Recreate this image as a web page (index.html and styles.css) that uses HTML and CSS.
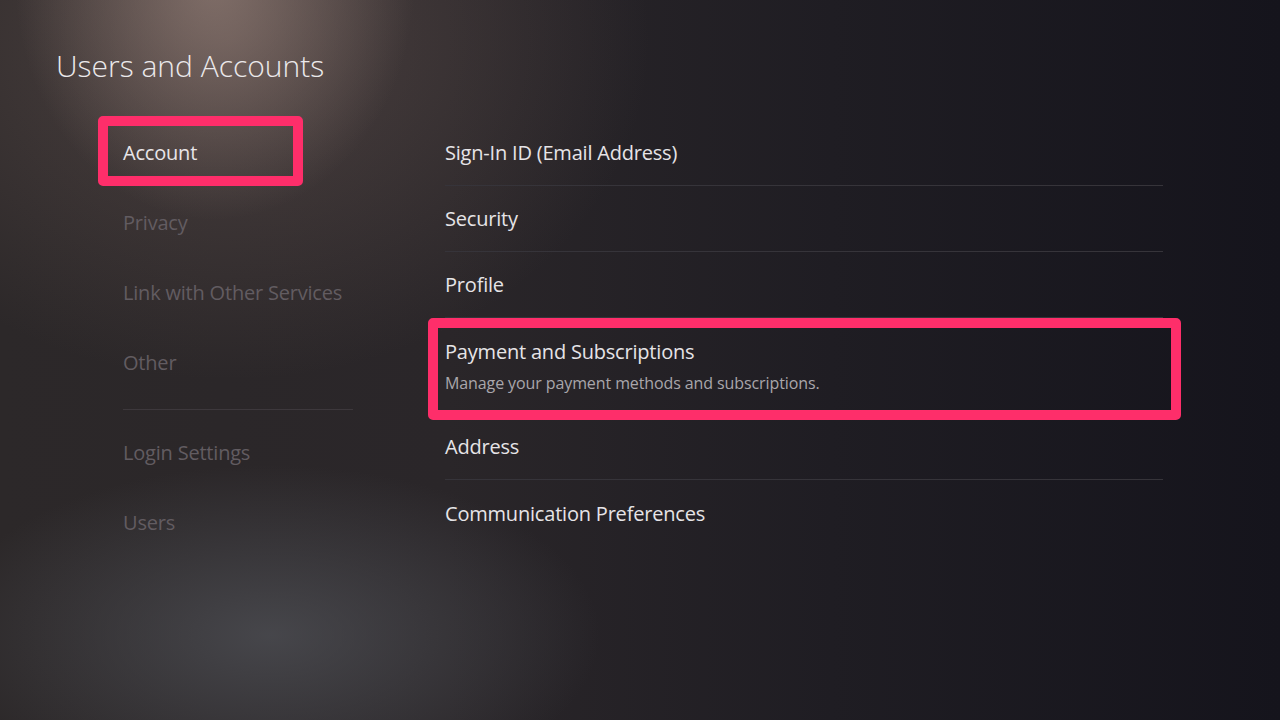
FILE: index.html
```html
<!DOCTYPE html>
<html lang="en">

<head>
  <meta charset="UTF-8">
  <meta name="viewport" content="width=device-width, initial-scale=1.0">
  <title>Users and Accounts</title>
  <link rel="stylesheet" href="styles.css">
</head>

<body>

  <div class="screen">
    <!-- Header -->
    <h1 class="page-title">Users and Accounts</h1>

    <div class="columns">
      <!-- Left menu -->
      <div class="side-menu">
        <div class="side-item focused">Account</div>
        <div class="side-item">Privacy</div>
        <div class="side-item">Link with Other Services</div>
        <div class="side-item">Other</div>
        <div class="side-divider"></div>
        <div class="side-item">Login Settings</div>
        <div class="side-item">Users</div>
      </div>

      <!-- Settings list -->
      <div class="settings-list">
        <div class="setting-row">Sign-In ID (Email Address)</div>
        <div class="setting-row">Security</div>
        <div class="setting-row">Profile</div>
        <div class="setting-row focused">
          <div class="setting-title">Payment and Subscriptions</div>
          <div class="setting-desc">Manage your payment methods and subscriptions.</div>
        </div>
        <div class="setting-row">Address</div>
        <div class="setting-row last">Communication Preferences</div>
      </div>
    </div>
  </div>

</body>

</html>
```

FILE: styles.css
```css
body {
  font-family: "Open Sans", "Noto Sans", sans-serif;
  margin: 0;
  padding: 0;
  background: #1c1a20;
  color: #e6e4e7;
}

/* Screen background */
.screen {
  width: 1280px;
  height: 720px;
  box-sizing: border-box;
  padding: 44px 0 0 56px;
  overflow: hidden;
  background:
    radial-gradient(ellipse 200px 240px at 215px -20px, rgba(175, 150, 140, 0.55), rgba(175, 150, 140, 0) 100%),
    radial-gradient(ellipse 420px 340px at 230px 40px, rgba(125, 104, 98, 0.4), rgba(125, 104, 98, 0) 100%),
    radial-gradient(ellipse 330px 170px at 270px 635px, rgba(85, 87, 93, 0.65), rgba(85, 87, 93, 0) 100%),
    linear-gradient(90deg, #2c2829 0%, #2a2629 35%, #1f1d23 65%, #15141c 100%);
}

.page-title {
  margin: 0;
  font-size: 30px;
  font-weight: 300;
  line-height: 44px;
  color: #ebe9eb;
}

.columns {
  display: grid;
  grid-template-columns: 347px 718px;
  margin: 28px 0 0 42px;
}

/* Left menu */
.side-menu {
  display: flex;
  flex-direction: column;
}

.side-item {
  height: 70px;
  display: flex;
  align-items: center;
  padding: 2px 0 0 25px;
  font-size: 20px;
  letter-spacing: -0.2px;
  color: #625c61;
  box-sizing: border-box;
}

.side-item.focused {
  width: 205px;
  padding-left: 15px;
  border: 10px solid #fe2e6a;
  border-radius: 5px;
  color: #e8e5e8;
}

.side-divider {
  height: 1px;
  width: 230px;
  margin: 13px 0 6px 25px;
  background: #3d383c;
}

/* Settings list */
.settings-list {
  display: flex;
  flex-direction: column;
  padding-top: 4px;
}

.setting-row {
  height: 66px;
  display: flex;
  align-items: center;
  font-size: 20px;
  letter-spacing: -0.2px;
  color: #e6e4e7;
  border-bottom: 1px solid #36343a;
  box-sizing: border-box;
}

.setting-row.last {
  border-bottom: none;
}

.setting-row.focused {
  height: 102px;
  margin: 0 -18px -6px -17px;
  padding: 10px 0 0 7px;
  border: 10px solid #fe2e6a;
  border-radius: 5px;
  flex-direction: column;
  align-items: flex-start;
  justify-content: flex-start;
}

.setting-title {
  font-size: 20px;
  line-height: 28px;
}

.setting-desc {
  font-size: 16px;
  line-height: 22px;
  margin-top: 6px;
  letter-spacing: -0.1px;
  color: #a9a6ab;
}
```
